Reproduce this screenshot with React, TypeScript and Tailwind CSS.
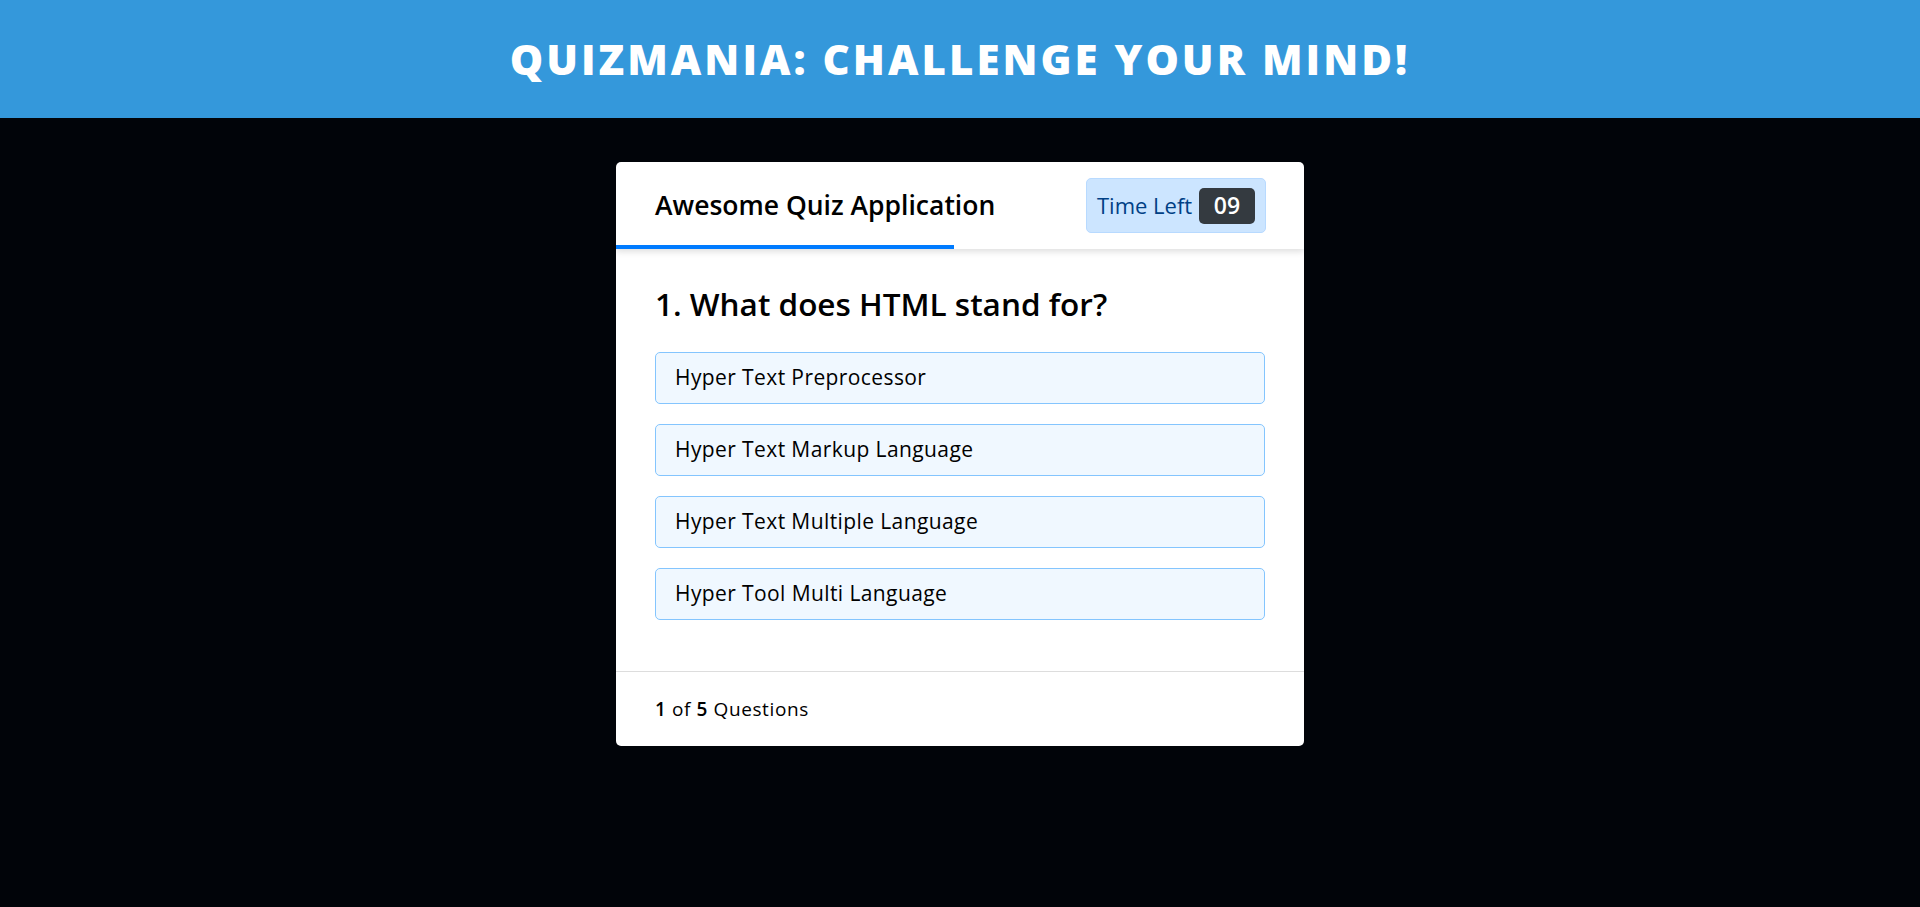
import React from 'react';

const options = [
  'Hyper Text Preprocessor',
  'Hyper Text Markup Language',
  'Hyper Text Multiple Language',
  'Hyper Tool Multi Language',
];

export default function App() {
  return (
    <div className="min-h-screen bg-[#010409] font-['Open_Sans',sans-serif]">
      {/* Top banner */}
      <header className="h-[118px] bg-[#3498db] flex items-center justify-center">
        <h1 className="text-white text-[42px] font-extrabold tracking-[3px] uppercase leading-none">
          Quizmania: Challenge Your Mind!
        </h1>
      </header>

      <main className="flex justify-center pt-[44px]">
        <div className="w-[688px] bg-white rounded-[5px] overflow-hidden">
          {/* Card header */}
          <div className="relative h-[87px] flex items-center justify-between pl-[39px] pr-[38px] shadow-[0_3px_6px_rgba(0,0,0,0.12)]">
            <h2 className="text-[26.5px] font-semibold text-black">Awesome Quiz Application</h2>
            <div className="h-[55px] w-[180px] flex items-center justify-between pl-[10px] pr-[10px] bg-[#cce5ff] border border-[#b8daff] rounded-[5px]">
              <span className="text-[22px] text-[#004085]">Time Left</span>
              <span className="w-[56px] h-[36px] flex items-center justify-center bg-[#343a40] rounded-[5px] text-white text-[23px] font-semibold">
                09
              </span>
            </div>
            <div className="absolute left-0 bottom-0 w-[338px] h-[4px] bg-[#007bff]" />
          </div>

          {/* Question body */}
          <div className="px-[39px] pt-[35px] pb-[51px]">
            <p className="h-[40px] leading-[40px] text-[31.5px] font-semibold text-black mb-[28px]">
              1. What does HTML stand for?
            </p>
            <div className="flex flex-col gap-[20px]">
              {options.map((o) => (
                <div
                  key={o}
                  className="h-[52px] flex items-center px-[19px] bg-[#f0f8ff] border border-[#84c5fe] rounded-[5px] text-[21px] tracking-[0.4px] text-black"
                >
                  {o}
                </div>
              ))}
            </div>
          </div>

          {/* Footer */}
          <div className="h-[75px] flex items-center px-[39px] border-t border-[#dddddd] text-[19px] tracking-[0.6px] text-black">
            <span>
              <span className="font-semibold">1</span> of <span className="font-semibold">5</span> Questions
            </span>
          </div>
        </div>
      </main>
    </div>
  );
}
